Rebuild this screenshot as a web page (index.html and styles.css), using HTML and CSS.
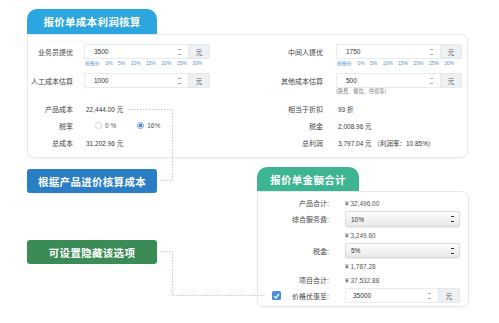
FILE: index.html
```html
<!DOCTYPE html>
<html lang="zh-CN">
<head>
    <meta charset="UTF-8">
    <meta name="viewport" content="width=device-width, initial-scale=1.0">
    <title>报价单成本利润核算</title>
    <link rel="stylesheet" href="styles.css">
</head>
<body>
<div class="page">
    <div class="calc">
        <div class="tab tab-blue">报价单成本利润核算</div>
        <div class="card calc-card">
            <div class="label">业务员提优</div>
            <div class="field"><span class="input">3500<i class="spin"></i></span><span class="addon">元</span></div>
            <div class="label label-r">中间人提优</div>
            <div class="field"><span class="input">1750<i class="spin"></i></span><span class="addon">元</span></div>

            <div class="hint hint-l"><span>按报价</span><span>0%</span><span>5%</span><span>10%</span><span>15%</span><span>20%</span><span>25%</span><span>30%</span></div>
            <div class="hint hint-r"><span>按报价</span><span>0%</span><span>5%</span><span>10%</span><span>15%</span><span>20%</span><span>25%</span><span>30%</span></div>

            <div class="label">人工成本估算</div>
            <div class="field"><span class="input">1000<i class="spin"></i></span><span class="addon">元</span></div>
            <div class="label label-r">其他成本估算</div>
            <div class="field"><span class="input">500<i class="spin"></i></span><span class="addon">元</span></div>

            <div class="note-text">(路费、餐饮、住宿等)</div>

            <div class="label">产品成本</div>
            <div class="value">22,444.00 元</div>
            <div class="label label-r">相当于折扣</div>
            <div class="value">93 折</div>

            <div class="label">税率</div>
            <div class="radios">
                <span class="radio"></span><span>0 %</span>
                <span class="radio on"></span><span>16%</span>
            </div>
            <div class="label label-r">税金</div>
            <div class="value">2,008.96 元</div>

            <div class="label">总成本</div>
            <div class="value">31,202.96 元</div>
            <div class="label label-r">总利润</div>
            <div class="value">3,797.04 元 （利润率：10.85%）</div>
        </div>
    </div>

    <div class="lower">
        <div class="notes">
            <div class="note note-blue">根据产品进价核算成本</div>
            <div class="note note-green">可设置隐藏该选项</div>
        </div>
        <div class="total">
            <div class="tab tab-green">报价单金额合计</div>
            <div class="card total-card">
                <div class="label">产品合计:</div>
                <div class="value">¥ 32,496.00</div>

                <div class="label">综合服务费:</div>
                <div class="select">10%<i class="caret"></i></div>

                <div class="value value-2">¥ 3,249.60</div>

                <div class="label">税金:</div>
                <div class="select">5%<i class="caret"></i></div>

                <div class="value value-2">¥ 1,787.28</div>

                <div class="label">项目合计:</div>
                <div class="value">¥ 37,532.88</div>

                <div class="label label-check"><span class="check"><svg width="7" height="6" viewBox="0 0 7 6"><path d="M1 3.2 2.8 5 6 1" fill="none" stroke="#fff" stroke-width="1.3"/></svg></span><span>价格优惠至:</span></div>
                <div class="field"><span class="input">35000<i class="spin"></i></span><span class="addon">元</span></div>
            </div>
        </div>
    </div>

    <svg class="links" width="499" height="323">
        <polyline points="128,109.5 172.5,109.5 172.5,180.5 160,180.5"/>
        <polyline points="160,251.5 172.5,251.5 172.5,295.5 266,295.5"/>
    </svg>
</div>
</body>
</html>
```

FILE: styles.css
```css
* { box-sizing: border-box; }
body {
    margin: 0;
    background: #fff;
    color: #444;
    font-family: "Liberation Sans", "Noto Sans CJK SC", sans-serif;
    font-size: 7px;
}
.page {
    position: relative;
    width: 499px;
    height: 323px;
    overflow: hidden;
}

/* tabs and cards */
.tab {
    height: 25px;
    border-radius: 10px 10px 0 0;
    color: #fff;
    font-size: 10.5px;
    font-weight: bold;
    letter-spacing: 0.3px;
    display: flex;
    align-items: center;
    justify-content: center;
}
.tab-blue { width: 130px; background: #2ba6de; }
.tab-green { width: 102px; height: 24px; background: #3db592; }
.card {
    border: 1px solid #e6e9ec;
    border-radius: 0 7px 7px 7px;
    background: #fff;
    box-shadow: 0 1px 2px rgba(0, 0, 0, 0.05);
}

.calc { margin-left: 27px; padding-top: 9px; width: 441px; }
.calc-card {
    display: grid;
    grid-template-columns: 56px 126px 126px 126px;
    grid-template-rows: 15px 14px 15px 12px 17px 17px 17px;
    padding: 9px 0 6px;
    height: 124px;
}

.label {
    display: flex;
    align-items: center;
    justify-content: flex-end;
    padding-right: 11px;
    white-space: nowrap;
    color: #444;
}
.label-r { padding-right: 13px; }

/* input with addon */
.field { display: flex; height: 15px; }
.input {
    flex: 1;
    display: flex;
    align-items: center;
    padding-left: 9px;
    border: 1px solid #e9ecef;
    border-right: 0;
    border-radius: 2px 0 0 2px;
    color: #333;
    font-size: 6.5px;
}
.spin {
    margin-left: auto;
    margin-right: 7px;
    width: 3px;
    height: 6px;
    background:
        linear-gradient(to top, transparent 1px, #aaa 1px) top / 3px 2px no-repeat,
        linear-gradient(to bottom, transparent 1px, #aaa 1px) bottom / 3px 2px no-repeat;
}
.addon {
    width: 22px;
    display: flex;
    align-items: center;
    justify-content: center;
    background: #eef1f4;
    border: 1px solid #e4e8ec;
    border-radius: 0 2px 2px 0;
    color: #555;
    font-size: 6.5px;
}

.hint {
    display: flex;
    gap: 5.4px;
    padding-left: 1px;
    font-size: 5px;
    line-height: 8px;
    color: #5d95cb;
}
.hint-l { grid-column: 2; }
.hint-r { grid-column: 4; }
.note-text {
    grid-column: 4;
    font-size: 5.2px;
    line-height: 6px;
    color: #777;
}

.value {
    display: flex;
    align-items: center;
    padding-left: 2px;
    color: #3a3a3a;
    font-size: 6.5px;
    white-space: nowrap;
}

.radios {
    display: flex;
    align-items: center;
    padding-left: 11px;
    font-size: 6.5px;
    color: #555;
}
.radio {
    width: 7px;
    height: 7px;
    margin-right: 3px;
    border: 1px solid #d4d4d4;
    border-radius: 50%;
    background: #fff;
}
.radio.on {
    margin-left: 21px;
    border-color: #6a9fdc;
    background: radial-gradient(circle, #4a86d0 0 1.6px, #fff 2.1px);
}

/* lower part */
.lower { display: flex; margin-left: 27px; margin-top: 9px; }
.notes { width: 130px; padding-top: 2px; }
.note {
    height: 24px;
    border-radius: 3px;
    color: #fff;
    font-size: 10.5px;
    font-weight: bold;
    letter-spacing: 0.3px;
    display: flex;
    align-items: center;
    justify-content: center;
}
.note-blue { background: #2a7ec3; }
.note-green { margin-top: 47px; background: #3b8b56; }

.total { margin-left: 100px; width: 212px; }
.total-card {
    display: grid;
    grid-template-columns: 87px 115px;
    grid-template-rows: 12px 16px 12px 15px 12px 12px 15px;
    row-gap: 2px;
    padding: 5px 0 3px;
    height: 116px;
}
.total-card .label { padding-right: 16px; }
.total-card .value { padding-left: 0; color: #555; }
.value-2 { grid-column: 2; }
.select {
    display: flex;
    align-items: center;
    padding-left: 5px;
    border: 1px solid #dcdcdc;
    border-radius: 2px;
    background: linear-gradient(#fdfdfd, #e8e8e8);
    box-shadow: 0 1px 1px rgba(0, 0, 0, 0.08);
    color: #333;
    font-size: 6.5px;
}
.caret {
    margin-left: auto;
    margin-right: 5px;
    width: 3px;
    height: 6px;
    background:
        linear-gradient(to top, transparent 1px, #333 1px) top / 3px 2px no-repeat,
        linear-gradient(to bottom, transparent 1px, #333 1px) bottom / 3px 2px no-repeat;
}
.total-card .field { height: 15px; }
.total-card .input { padding-left: 7px; }
.label-check { justify-content: space-between; padding-left: 14px; }
.check {
    width: 9px;
    height: 9px;
    display: flex;
    align-items: center;
    justify-content: center;
    border-radius: 1.5px;
    background: #4a8fdf;
}

.links {
    position: absolute;
    left: 0;
    top: 0;
    pointer-events: none;
}
.links polyline {
    fill: none;
    stroke: #c8c8c8;
    stroke-width: 1;
    stroke-dasharray: 1.5 1.5;
}
```
